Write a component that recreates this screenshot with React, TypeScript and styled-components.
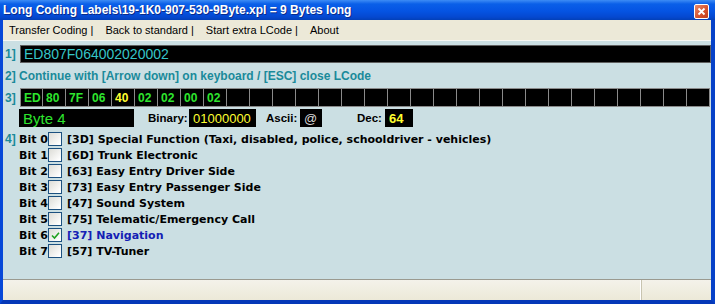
import React from "react";
import styled, { createGlobalStyle } from "styled-components";

const Global = createGlobalStyle`
  html, body { margin: 0; padding: 0; background: #fff; }
  body { width: 715px; height: 304px; overflow: hidden; }
`;

const Window = styled.div`
  width: 715px;
  height: 304px;
  display: flex;
  flex-direction: column;
  font-family: "Liberation Sans", Arial, sans-serif;
`;

const TitleBar = styled.div`
  height: 20px;
  flex: none;
  display: flex;
  align-items: center;
  justify-content: space-between;
  padding: 0 6px 0 3px;
  background: linear-gradient(180deg, #3d8cf5 0%, #0a5fe8 20%, #0554e3 55%, #0548d0 85%, #0340b8 100%);
  color: #fff;
  font-family: "Liberation Sans", Arial, sans-serif;
  font-weight: bold;
  font-size: 12px;
  text-shadow: 1px 1px 0 #0a2a8a;
`;

const CloseBtn = styled.div`
  width: 13px;
  height: 13px;
  border: 1px solid #fff;
  border-radius: 2px;
  background: linear-gradient(135deg, #e88a6a 0%, #d5502c 60%, #c0401e 100%);
  display: flex;
  align-items: center;
  justify-content: center;
  margin-top: 2px;
`;

const Frame = styled.div`
  flex: 1;
  display: flex;
  flex-direction: column;
  border-left: 3px solid #0748d8;
  border-right: 4px solid #0641c8;
  border-bottom: 4px solid #0538b8;
  min-height: 0;
`;

const MenuBar = styled.div`
  height: 20px;
  flex: none;
  background: #ece9d8;
  display: flex;
  align-items: center;
  padding-left: 6px;
  font-family: "Liberation Sans", Arial, sans-serif;
  font-size: 11px;
  color: #000;
  border-bottom: 1px solid #f8f8f4;
`;

const MenuItem = styled.span`
  margin-right: 12px;
  white-space: pre;
`;

const Main = styled.div`
  flex: 1;
  background: #cbdfe3;
  padding: 3px 0 0 2px;
  display: flex;
  flex-direction: column;
  min-height: 0;
`;

const Row = styled.div<{ $mt?: number; $h?: number }>`
  display: flex;
  align-items: center;
  margin-top: ${(p) => p.$mt ?? 0}px;
  height: ${(p) => p.$h ?? 18}px;
`;

const Num = styled.span`
  width: 15px;
  flex: none;
  color: #1a8a9a;
  font-family: "Liberation Sans", Arial, sans-serif;
  font-weight: bold;
  font-size: 12px;
`;

const CodeField = styled.div`
  flex: 1;
  height: 18px;
  background: #000;
  border: 1px solid #606060;
  box-sizing: border-box;
  color: #36c6c8;
  font-size: 14px;
  display: flex;
  align-items: center;
  padding-left: 3px;
`;

const Hint = styled.span`
  color: #1a8a9a;
  font-weight: bold;
  font-size: 12px;
`;

const Cells = styled.div`
  display: grid;
  grid-template-columns: repeat(30, 23px);
  height: 19px;
  background: #000;
`;

const Cell = styled.div<{ $hl?: boolean }>`
  border: 1px solid #8a8a8a;
  border-left: none;
  box-sizing: border-box;
  color: ${(p) => (p.$hl ? "#ffff30" : "#2ee52e")};
  font-weight: bold;
  font-size: 12px;
  display: flex;
  align-items: center;
  padding-left: 3px;
  &:first-child { border-left: 1px solid #8a8a8a; }
`;

const ByteRow = styled.div`
  display: flex;
  align-items: center;
  height: 18px;
  margin-top: 2px;
  padding-left: 14px;
`;

const Box = styled.div<{ $w: number; $color: string; $bold?: boolean; $size?: number }>`
  width: ${(p) => p.$w}px;
  height: 18px;
  background: #000;
  color: ${(p) => p.$color};
  font-size: ${(p) => p.$size ?? 13}px;
  font-weight: ${(p) => (p.$bold ? "bold" : "normal")};
  display: flex;
  align-items: center;
  padding-left: 4px;
  box-sizing: border-box;
  flex: none;
`;

const Lbl = styled.span<{ $ml: number; $w: number }>`
  margin-left: ${(p) => p.$ml}px;
  width: ${(p) => p.$w}px;
  flex: none;
  color: #000;
  font-family: "Liberation Sans", Arial, sans-serif;
  font-size: 11.5px;
  font-weight: bold;
  white-space: nowrap;
`;

const Bits = styled.div`
  display: grid;
  grid-template-columns: 14px 29px 19px auto;
  grid-auto-rows: 16px;
  align-items: center;
  margin-top: 4px;
  font-family: "DejaVu Sans", sans-serif;
  font-size: 11px;
  font-weight: bold;
`;

const BitName = styled.span`
  color: #000;
  white-space: pre;
`;

const Check = styled.div`
  width: 12px;
  height: 12px;
  border: 1px solid #1c5180;
  background: linear-gradient(135deg, #dcdcd6 0%, #ffffff 90%);
  display: flex;
  align-items: center;
  justify-content: center;
`;

const BitText = styled.span<{ $on?: boolean }>`
  color: ${(p) => (p.$on ? "#1420b4" : "#000")};
  white-space: pre;
`;

const StatusBar = styled.div`
  height: 20px;
  flex: none;
  background: linear-gradient(180deg, #f4f2ea, #ece9d8);
  border-top: 1px solid #9a9a90;
  display: grid;
  grid-template-columns: 639px 1fr;
`;

const StatusPane = styled.div`
  border-right: 1px solid #c8c4b0;
  box-shadow: inset -1px 0 0 #fff;
`;

const bytes = ["ED", "80", "7F", "06", "40", "02", "02", "00", "02"];
const bits = [
  "[3D] Special Function (Taxi, disabled, police, schooldriver - vehicles)",
  "[6D] Trunk Electronic",
  "[63] Easy Entry Driver Side",
  "[73] Easy Entry Passenger Side",
  "[47] Sound System",
  "[75] Telematic/Emergency Call",
  "[37] Navigation",
  "[57] TV-Tuner",
];

export default function App() {
  return (
    <>
      <Global />
      <Window>
        <TitleBar>
          <span>Long Coding Labels\19-1K0-907-530-9Byte.xpl = 9 Bytes long</span>
          <CloseBtn>
            <svg width="9" height="9" viewBox="0 0 9 9">
              <path d="M1.5 1.5 L7.5 7.5 M7.5 1.5 L1.5 7.5" stroke="#fff" strokeWidth="1.8" />
            </svg>
          </CloseBtn>
        </TitleBar>
        <Frame>
          <MenuBar>
            <MenuItem>Transfer Coding |</MenuItem>
            <MenuItem>Back to standard |</MenuItem>
            <MenuItem>Start extra LCode |</MenuItem>
            <MenuItem>About</MenuItem>
          </MenuBar>
          <Main>
            <Row $mt={1}>
              <Num>1]</Num>
              <CodeField>ED807F064002020002</CodeField>
            </Row>
            <Row $mt={5} $h={16}>
              <Hint>2] Continue with [Arrow down] on keyboard / [ESC] close LCode</Hint>
            </Row>
            <Row $mt={4} $h={19}>
              <Num>3]</Num>
              <Cells>
                {Array.from({ length: 30 }).map((_, i) => (
                  <Cell key={i} $hl={i === 4}>
                    {bytes[i] ?? ""}
                  </Cell>
                ))}
              </Cells>
            </Row>
            <ByteRow>
              <Box $w={115} $color="#2ee52e" $size={15}>
                Byte 4
              </Box>
              <Lbl $ml={14} $w={41}>Binary:</Lbl>
              <Box $w={67} $color="#ffff30">
                01000000
              </Box>
              <Lbl $ml={10} $w={34}>Ascii:</Lbl>
              <Box $w={22} $color="#d8d8d8">
                @
              </Box>
              <Lbl $ml={35} $w={28}>Dec:</Lbl>
              <Box $w={28} $color="#ffff30" $bold>
                64
              </Box>
            </ByteRow>
            <Bits>
              {bits.map((t, i) => (
                <React.Fragment key={i}>
                  <Num>{i === 0 ? "4]" : ""}</Num>
                  <BitName>Bit {i}</BitName>
                  <Check>
                    {i === 6 && (
                      <svg width="9" height="9" viewBox="0 0 9 9">
                        <path d="M1 4.5 L3.5 7 L8 1.8" stroke="#21a121" strokeWidth="1.6" fill="none" />
                      </svg>
                    )}
                  </Check>
                  <BitText $on={i === 6}>{t}</BitText>
                </React.Fragment>
              ))}
            </Bits>
          </Main>
          <StatusBar>
            <StatusPane />
            <div />
          </StatusBar>
        </Frame>
      </Window>
    </>
  );
}
